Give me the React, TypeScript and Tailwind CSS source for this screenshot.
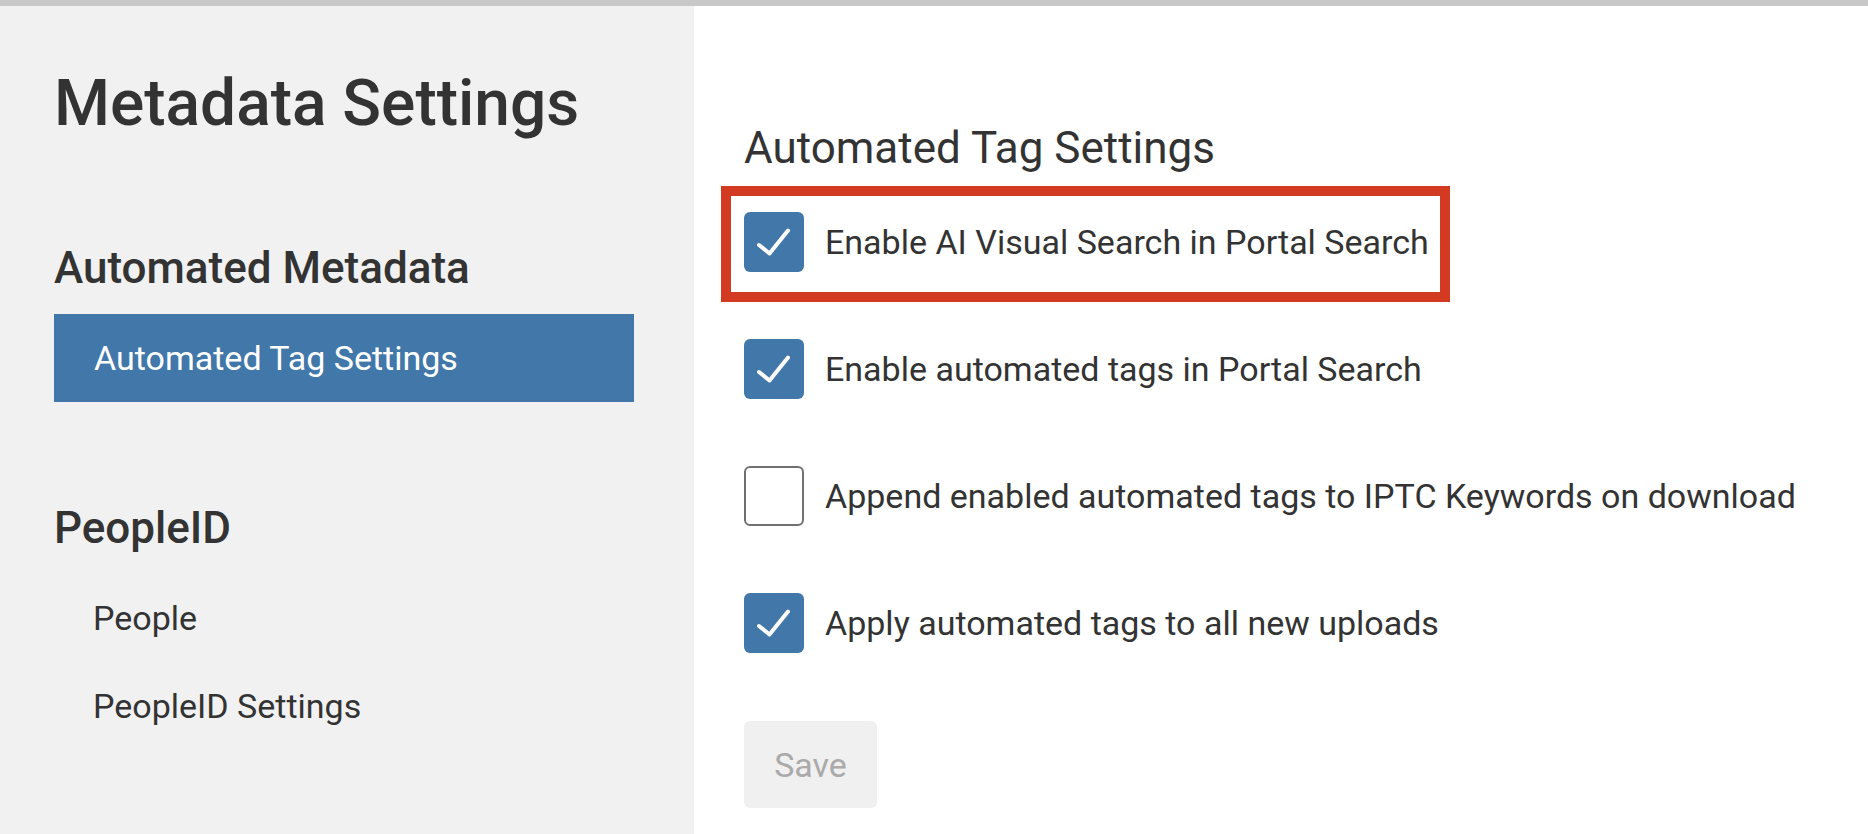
import React from "react";

const Check = () => (
  <svg width="60" height="60" viewBox="0 0 60 60" className="block">
    <polyline
      points="15,33 25.5,41.5 44,18.5"
      fill="none"
      stroke="#ffffff"
      strokeWidth="4"
      strokeLinecap="round"
      strokeLinejoin="round"
    />
  </svg>
);

function Box({ checked }: { checked: boolean }) {
  return checked ? (
    <div className="w-[60px] h-[60px] shrink-0 rounded-[6px] bg-[#4277aa]">
      <Check />
    </div>
  ) : (
    <div className="w-[60px] h-[60px] shrink-0 rounded-[6px] border-2 border-[#707070] bg-white" />
  );
}

function Row({ checked, label, highlight }: { checked: boolean; label: string; highlight?: boolean }) {
  return (
    <div className="relative inline-flex items-center gap-[21px] self-start">
      {highlight && (
        <div className="absolute left-[-23px] top-[-26px] bottom-[-30px] right-[-21px] border-[10px] border-[#d23a22] pointer-events-none" />
      )}
      <Box checked={checked} />
      <span className="text-[34px] leading-[40px] text-[#333333]">{label}</span>
    </div>
  );
}

export default function App() {
  return (
    <div
      className="w-full h-[834px] flex flex-col bg-white overflow-hidden"
      style={{ fontFamily: "Roboto, 'Noto Sans', sans-serif" }}
    >
      <div className="h-[6px] bg-[#c8c8c8] shrink-0" />
      <div className="flex flex-1 min-h-0">
        <aside className="w-[694px] shrink-0 bg-[#f1f1f1] pl-[54px] pr-[60px] pt-[60px]">
          <h1 className="text-[64px] leading-[76px] font-medium text-[#333333]">Metadata Settings</h1>
          <h2 className="mt-[100px] text-[44px] leading-[52px] font-medium text-[#333333]">Automated Metadata</h2>
          <nav className="mt-[20px]">
            <div className="h-[88px] flex items-center pl-[40px] bg-[#4277aa] text-white text-[34px] leading-[40px]">
              Automated Tag Settings
            </div>
          </nav>
          <h2 className="mt-[100px] text-[44px] leading-[52px] font-medium text-[#333333]">PeopleID</h2>
          <nav className="mt-[20px]">
            <div className="h-[88px] flex items-center pl-[39px] text-[#333333] text-[34px] leading-[40px]">People</div>
            <div className="h-[88px] flex items-center pl-[39px] text-[#333333] text-[34px] leading-[40px]">
              PeopleID Settings
            </div>
          </nav>
        </aside>
        <main className="flex-1 pl-[50px] pt-[116px] flex flex-col">
          <h2 className="text-[44px] leading-[52px] text-[#333333]">Automated Tag Settings</h2>
          <div className="mt-[38px] flex flex-col gap-[67px]">
            <Row checked label="Enable AI Visual Search in Portal Search" highlight />
            <Row checked label="Enable automated tags in Portal Search" />
            <Row checked={false} label="Append enabled automated tags to IPTC Keywords on download" />
            <Row checked label="Apply automated tags to all new uploads" />
          </div>
          <button className="mt-[68px] self-start w-[133px] h-[87px] rounded-[6px] bg-[#f0f0f0] text-[#aaaaaa] text-[34px] leading-[40px]">
            Save
          </button>
        </main>
      </div>
    </div>
  );
}
